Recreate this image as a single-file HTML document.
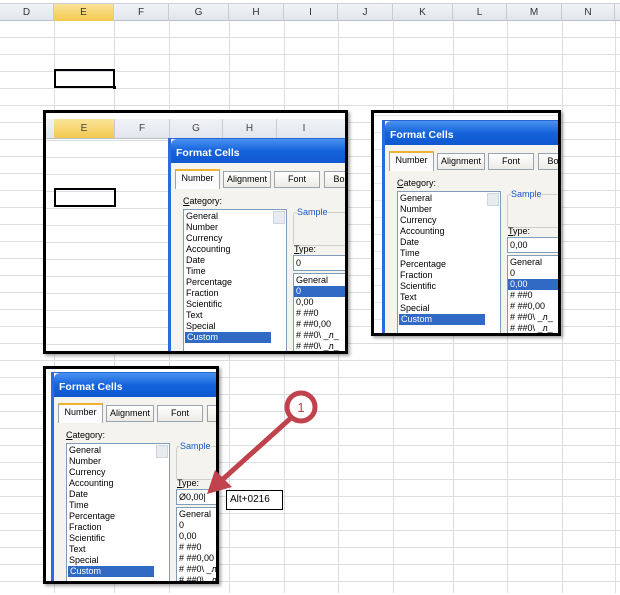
<!DOCTYPE html>
<html><head><meta charset="utf-8"><style>
*{margin:0;padding:0;box-sizing:border-box}
html,body{width:620px;height:595px;overflow:hidden}
body{position:relative;background:#fff;font-family:"Liberation Sans","DejaVu Sans",sans-serif}
.grid{position:absolute;left:0;top:0;width:620px;height:595px;
background-image:linear-gradient(#dadde2 1px,transparent 1px);background-size:100% 17px;background-position:0 3px}
.vl{position:absolute;top:3px;width:1px;height:590px;background:#dadde2}
.hdr{position:absolute;top:3px;height:18px;left:0;width:620px;background:linear-gradient(#f1f3f6,#e2e6ec);border-bottom:1px solid #b9c0c9;border-top:1px solid #c9ced6}
.hc{position:absolute;top:0;height:17px;font-size:10px;color:#333;text-align:center;line-height:17px;border-right:1px solid #c7ccd3}
.sel{background:linear-gradient(#fbe39a,#f2c94f)}
.panel{position:absolute;border:3px solid #000;overflow:hidden;background:#fff;box-shadow:2px 2px 3px rgba(0,0,0,.35)}
.dlg{position:absolute;width:300px;height:300px;background:#f4f3ee;border:1px solid #2a66d8;border-left:3px solid #2a6ce0;font-size:9px;color:#000}
.tb{position:absolute;left:0;top:0;width:100%;height:24px;background:linear-gradient(#4a92f0,#1463dc 50%,#0f58d0);border-radius:6px 6px 0 0;color:#fff;font-weight:bold;font-size:10.5px;padding:8px 0 0 5px}
.tab{position:absolute;top:32px;height:17px;border:1px solid #9aa4b0;background:linear-gradient(#fff,#ecebe5);font-size:9px;text-align:center;line-height:15px}
.tab.on{top:30px;height:20px;border-top:2px solid #f0b030;border-bottom:none;background:#fcfcfe}
.lbl{position:absolute;font-size:9px}
.lb{position:absolute;background:#fff;border:1px solid #7f9db9}
.it{position:absolute;left:2px;height:11px;line-height:11px;font-size:9px;white-space:nowrap}
.hi{background:#316ac5;color:#fff}
</style></head><body>
<div class="grid"></div>
<div class="vl" style="left:54px"></div><div class="vl" style="left:114px"></div><div class="vl" style="left:169px"></div><div class="vl" style="left:229px"></div><div class="vl" style="left:284px"></div><div class="vl" style="left:338px"></div><div class="vl" style="left:393px"></div><div class="vl" style="left:453px"></div><div class="vl" style="left:507px"></div><div class="vl" style="left:562px"></div><div class="vl" style="left:615px"></div>
<div class="hdr">
<div class="hc" style="left:0;width:54px">D</div><div class="hc sel" style="left:54px;width:60px">E</div><div class="hc" style="left:114px;width:55px">F</div><div class="hc" style="left:169px;width:60px">G</div><div class="hc" style="left:229px;width:55px">H</div><div class="hc" style="left:284px;width:54px">I</div><div class="hc" style="left:338px;width:55px">J</div><div class="hc" style="left:393px;width:60px">K</div><div class="hc" style="left:453px;width:54px">L</div><div class="hc" style="left:507px;width:55px">M</div><div class="hc" style="left:562px;width:53px">N</div>
</div>
<div style="position:absolute;left:54px;top:69px;width:61px;height:19px;border:2px solid #000"></div>
<div style="position:absolute;left:113px;top:86px;width:3px;height:3px;background:#000"></div>

<!-- panel 1 -->
<div class="panel" style="left:43px;top:110px;width:305px;height:244px">
 <div style="position:absolute;left:0;top:0;width:100%;height:100%;background-image:linear-gradient(#dadde2 1px,transparent 1px);background-size:100% 17px;background-position:0 10px"></div>
 <div style="position:absolute;left:0;top:6px;width:100%;height:20px;background:linear-gradient(#f1f3f6,#e2e6ec);border-bottom:1px solid #b9c0c9;font-size:10px;color:#444">
  <div style="position:absolute;left:8px;width:60px;height:19px;line-height:19px;text-align:center" class="sel">E</div>
  <div style="position:absolute;left:68px;width:55px;line-height:19px;text-align:center;border-left:1px solid #c7ccd3">F</div>
  <div style="position:absolute;left:123px;width:53px;line-height:19px;text-align:center;border-left:1px solid #c7ccd3">G</div>
  <div style="position:absolute;left:176px;width:54px;line-height:19px;text-align:center;border-left:1px solid #c7ccd3">H</div>
  <div style="position:absolute;left:230px;width:55px;line-height:19px;text-align:center;border-left:1px solid #c7ccd3">I</div>
 </div>
 <div style="position:absolute;left:8px;top:75px;width:62px;height:19px;border:2px solid #000"></div>
 <div class="dlg" style="left:122px;top:25px">
  <div class="tb">Format Cells</div>
  <div class="tab on" style="left:4px;width:45px">Number</div><div class="tab" style="left:52px;width:48px">Alignment</div><div class="tab" style="left:103px;width:46px">Font</div><div class="tab" style="left:153px;width:46px">Border</div>
  <div class="lbl" style="left:12px;top:57px"><u>C</u>ategory:</div>
  <div class="lb" style="left:12px;top:70px;width:104px;height:150px">
   <div style="position:absolute;right:1px;top:1px;width:12px;height:13px;background:#e8ebf0;border:1px solid #cfd5de"></div>
   <div class="it" style="top:1px">General</div><div class="it" style="top:12px">Number</div><div class="it" style="top:23px">Currency</div><div class="it" style="top:34px">Accounting</div><div class="it" style="top:45px">Date</div><div class="it" style="top:56px">Time</div><div class="it" style="top:67px">Percentage</div><div class="it" style="top:78px">Fraction</div><div class="it" style="top:89px">Scientific</div><div class="it" style="top:100px">Text</div><div class="it" style="top:111px">Special</div><div class="it hi" style="top:122px;width:86px;padding-left:2px;left:1px">Custom</div>
  </div>
  <div style="position:absolute;left:122px;top:73px;width:200px;height:34px;border:1px solid #d0d0c8;border-radius:3px"></div>
  <div class="lbl" style="left:126px;top:68px;color:#1a56c8;background:#f4f3ee">Sample</div>
  <div class="lbl" style="left:123px;top:105px"><u>T</u>ype:</div>
  <div class="lb" style="left:122px;top:116px;width:200px;height:16px"><div class="it" style="top:2px">0</div></div>
  <div class="lb" style="left:122px;top:134px;width:200px;height:90px">
   <div class="it" style="top:1px">General</div><div class="it hi" style="top:12px;left:0;width:200px;padding-left:2px">0</div><div class="it" style="top:23px">0,00</div><div class="it" style="top:34px"># ##0</div><div class="it" style="top:45px"># ##0,00</div><div class="it" style="top:56px"># ##0\ _л_</div><div class="it" style="top:67px"># ##0\ _л_</div>
  </div>
 </div>
</div>

<!-- panel 2 -->
<div class="panel" style="left:371px;top:110px;width:190px;height:226px">
 <div style="position:absolute;left:0;top:0;width:100%;height:100%;background-image:linear-gradient(#e4e6ea 1px,transparent 1px);background-size:100% 17px;background-position:0 2px"></div>
 <div class="dlg" style="left:8px;top:7px">
  <div class="tb">Format Cells</div>
  <div class="tab on" style="left:4px;width:45px">Number</div><div class="tab" style="left:52px;width:48px">Alignment</div><div class="tab" style="left:103px;width:46px">Font</div><div class="tab" style="left:153px;width:46px">Border</div>
  <div class="lbl" style="left:12px;top:57px"><u>C</u>ategory:</div>
  <div class="lb" style="left:12px;top:70px;width:104px;height:150px">
   <div style="position:absolute;right:1px;top:1px;width:12px;height:13px;background:#e8ebf0;border:1px solid #cfd5de"></div>
   <div class="it" style="top:1px">General</div><div class="it" style="top:12px">Number</div><div class="it" style="top:23px">Currency</div><div class="it" style="top:34px">Accounting</div><div class="it" style="top:45px">Date</div><div class="it" style="top:56px">Time</div><div class="it" style="top:67px">Percentage</div><div class="it" style="top:78px">Fraction</div><div class="it" style="top:89px">Scientific</div><div class="it" style="top:100px">Text</div><div class="it" style="top:111px">Special</div><div class="it hi" style="top:122px;width:86px;padding-left:2px;left:1px">Custom</div>
  </div>
  <div style="position:absolute;left:122px;top:73px;width:200px;height:34px;border:1px solid #d0d0c8;border-radius:3px"></div>
  <div class="lbl" style="left:126px;top:68px;color:#1a56c8;background:#f4f3ee">Sample</div>
  <div class="lbl" style="left:123px;top:105px"><u>T</u>ype:</div>
  <div class="lb" style="left:122px;top:116px;width:200px;height:16px"><div class="it" style="top:2px">0,00</div></div>
  <div class="lb" style="left:122px;top:134px;width:200px;height:90px">
   <div class="it" style="top:1px">General</div><div class="it" style="top:12px">0</div><div class="it hi" style="top:23px;left:0;width:200px;padding-left:2px">0,00</div><div class="it" style="top:34px"># ##0</div><div class="it" style="top:45px"># ##0,00</div><div class="it" style="top:56px"># ##0\ _л_</div><div class="it" style="top:67px"># ##0\ _л_</div>
  </div>
 </div>
</div>

<!-- panel 3 -->
<div class="panel" style="left:43px;top:366px;width:176px;height:218px">
 <div class="dlg" style="left:5px;top:3px">
  <div class="tb">Format Cells</div>
  <div class="tab on" style="left:4px;width:45px">Number</div><div class="tab" style="left:52px;width:48px">Alignment</div><div class="tab" style="left:103px;width:46px">Font</div><div class="tab" style="left:153px;width:46px">Border</div>
  <div class="lbl" style="left:12px;top:57px"><u>C</u>ategory:</div>
  <div class="lb" style="left:12px;top:70px;width:104px;height:150px">
   <div style="position:absolute;right:1px;top:1px;width:12px;height:13px;background:#e8ebf0;border:1px solid #cfd5de"></div>
   <div class="it" style="top:1px">General</div><div class="it" style="top:12px">Number</div><div class="it" style="top:23px">Currency</div><div class="it" style="top:34px">Accounting</div><div class="it" style="top:45px">Date</div><div class="it" style="top:56px">Time</div><div class="it" style="top:67px">Percentage</div><div class="it" style="top:78px">Fraction</div><div class="it" style="top:89px">Scientific</div><div class="it" style="top:100px">Text</div><div class="it" style="top:111px">Special</div><div class="it hi" style="top:122px;width:86px;padding-left:2px;left:1px">Custom</div>
  </div>
  <div style="position:absolute;left:122px;top:73px;width:200px;height:34px;border:1px solid #d0d0c8;border-radius:3px"></div>
  <div class="lbl" style="left:126px;top:68px;color:#1a56c8;background:#f4f3ee">Sample</div>
  <div class="lbl" style="left:123px;top:105px"><u>T</u>ype:</div>
  <div class="lb" style="left:122px;top:116px;width:200px;height:16px"><div class="it" style="top:2px">Ø0,00|</div></div>
  <div class="lb" style="left:122px;top:134px;width:200px;height:90px">
   <div class="it" style="top:1px">General</div><div class="it" style="top:12px">0</div><div class="it" style="top:23px">0,00</div><div class="it" style="top:34px"># ##0</div><div class="it" style="top:45px"># ##0,00</div><div class="it" style="top:56px"># ##0\ _л_</div><div class="it" style="top:67px"># ##0\ _л_</div>
  </div>
 </div>
</div>

<div style="position:absolute;left:226px;top:490px;width:57px;height:20px;border:1.5px solid #000;background:#fff;font-size:10px;line-height:17px;padding-left:3px">Alt+0216</div>

<svg style="position:absolute;left:0;top:0" width="620" height="595">
 <line x1="292" y1="417" x2="222" y2="480" stroke="#c0424c" stroke-width="5"/>
 <polygon points="207,494 215,470 232,487" fill="#c0424c"/>
 <circle cx="301" cy="407" r="14" fill="#fff" stroke="#c0424c" stroke-width="5"/>
 <text x="301" y="412" font-size="13" fill="#c0424c" text-anchor="middle" font-family="Liberation Sans">1</text>
</svg>
</body></html>
